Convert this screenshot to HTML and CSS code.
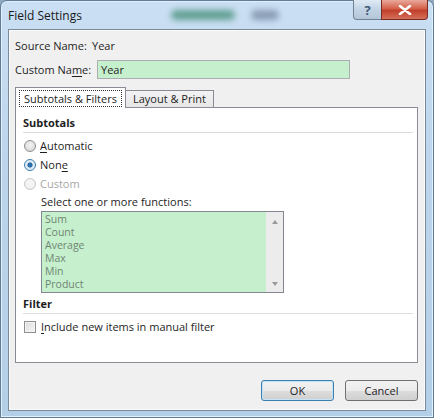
FILE: index.html
```html
<!DOCTYPE html>
<html lang="en">
<head>
    <meta charset="UTF-8">
    <title>Field Settings</title>
    <link rel="stylesheet" href="styles.css">
</head>
<body>
    <div class="window">
        <div class="titlebar">
            <span class="title">Field Settings</span>
            <span class="ghost ghost-green"></span>
            <span class="ghost ghost-grey"></span>
            <div class="caption-buttons">
                <span class="cap-btn help">?</span>
                <span class="cap-btn close">
                    <svg width="14" height="10" viewBox="0 0 14 10">
                        <path d="M2 1 L12 9 M12 1 L2 9" stroke="#fff" stroke-width="2.6" stroke-linecap="round"/>
                    </svg>
                </span>
            </div>
        </div>

        <div class="client">
            <div class="field-row">
                <span class="field-label">Source Name:</span>
                <span>Year</span>
            </div>
            <div class="field-row custom-row">
                <span class="field-label">Custom Na<u>m</u>e:</span>
                <div class="text-input">Year</div>
            </div>

            <div class="tabs">
                <div class="tab active"><span class="focus-ring">Subtotals &amp; Filters</span></div>
                <div class="tab">Layout &amp; Print</div>
            </div>

            <div class="tab-panel">
                <div class="group-title">Subtotals</div>
                <div class="option">
                    <span class="radio"></span>
                    <span><u>A</u>utomatic</span>
                </div>
                <div class="option">
                    <span class="radio checked"></span>
                    <span>Non<u>e</u></span>
                </div>
                <div class="option disabled">
                    <span class="radio"></span>
                    <span>Custom</span>
                </div>

                <div class="functions">
                    <div class="functions-label">Select one or more functions:</div>
                    <div class="listbox">
                        <ul class="items">
                            <li>Sum</li>
                            <li>Count</li>
                            <li>Average</li>
                            <li>Max</li>
                            <li>Min</li>
                            <li>Product</li>
                        </ul>
                        <div class="scrollbar">
                            <span class="arrow up"></span>
                            <span class="arrow down"></span>
                        </div>
                    </div>
                </div>

                <div class="group-title filter-title">Filter</div>
                <div class="option check-option">
                    <span class="checkbox"></span>
                    <span><u>I</u>nclude new items in manual filter</span>
                </div>
            </div>

            <div class="buttons">
                <button class="btn default">OK</button>
                <button class="btn">Cancel</button>
            </div>
        </div>
    </div>
</body>
</html>
```

FILE: styles.css
```css
* {
    margin: 0;
    padding: 0;
    box-sizing: border-box;
}

body {
    width: 434px;
    height: 418px;
    overflow: hidden;
    background: #8fa9c0;
    font-family: "Open Sans", "Noto Sans", sans-serif;
    font-size: 11px;
    color: #1e1e1e;
}

u {
    text-decoration-thickness: 1px;
    text-underline-offset: 2px;
}

/* window frame */
.window {
    height: 418px;
    display: flex;
    flex-direction: column;
    background: linear-gradient(180deg, #cadff3 0%, #bcd5ec 40%, #b3cfe7 100%);
    border: 1px solid #5f7d98;
    border-radius: 7px 7px 0 0;
    box-shadow: inset 0 0 0 1px #e3eef8;
}

.titlebar {
    height: 28px;
    display: flex;
    align-items: center;
    padding-left: 7px;
    flex-shrink: 0;
}

.title {
    font-size: 12px;
    color: #1a1a1a;
    width: 160px;
}

.ghost {
    height: 10px;
    border-radius: 5px;
    filter: blur(3px);
}

.ghost-green {
    width: 64px;
    margin-left: 3px;
    background: #3f8a73;
    opacity: 0.75;
}

.ghost-grey {
    width: 28px;
    margin-left: 16px;
    background: #6d7f9a;
    opacity: 0.7;
}

.caption-buttons {
    display: flex;
    align-self: flex-start;
    margin-left: auto;
    margin-right: 5px;
    margin-top: -1px;
}

.cap-btn {
    height: 20px;
    display: flex;
    align-items: center;
    justify-content: center;
    border: 1px solid #6f8193;
    border-top: none;
}

.help {
    width: 28px;
    border-radius: 0 0 0 4px;
    border-right: none;
    background: linear-gradient(180deg, #dfe9f4 0%, #c2d3e4 50%, #b3c6d9 100%);
    color: #3f5b77;
    font-size: 13px;
    font-weight: bold;
}

.close {
    width: 47px;
    border-radius: 0 0 4px 0;
    border-color: #7a2a22;
    background: linear-gradient(180deg, #e9a99b 0%, #d4604a 45%, #c0402b 55%, #d6705a 100%);
}

/* client area */
.client {
    flex: 1;
    margin: 0 7px 6px 7px;
    background: #f0f0f0;
    border: 1px solid #7b8a99;
    box-shadow: inset 0 0 0 1px #fbfbfb;
    display: flex;
    flex-direction: column;
    padding: 0 7px 0 6px;
}

.field-row {
    display: flex;
    align-items: center;
    height: 18px;
    margin-top: 6px;
}

.field-label {
    width: 77px;
    flex-shrink: 0;
}

.custom-row {
    margin-top: 6px;
}

.text-input {
    width: 253px;
    height: 19px;
    margin-left: 5px;
    background: #c6efce;
    border: 1px solid #abadb3;
    padding-left: 3px;
    line-height: 17px;
}

/* tabs */
.tabs {
    display: flex;
    align-items: flex-end;
    margin-top: 9px;
    height: 20px;
    position: relative;
    z-index: 1;
}

.tab {
    height: 17px;
    padding: 0 7px;
    border: 1px solid #898c95;
    border-bottom: none;
    background: linear-gradient(180deg, #f3f3f3, #e6e6e6);
    line-height: 16px;
}

.tab.active {
    background: #fff;
    padding: 2px 3px 0 3px;
    margin-bottom: -1px;
    height: 21px;
}

.tab + .tab {
    border-left: none;
}

.focus-ring {
    display: block;
    border: 1px dotted #333;
    padding: 0 4px;
    line-height: 15px;
}

.tab-panel {
    height: 256px;
    background: #fff;
    border: 1px solid #898c95;
    padding: 7px 4px 0 7px;
}

.group-title {
    font-weight: bold;
    height: 18px;
    line-height: 16px;
    border-bottom: 1px solid #dcdcdc;
}

.option {
    display: flex;
    align-items: center;
    height: 19px;
    gap: 4px;
    padding-left: 1px;
}

.group-title + .option {
    margin-top: 3px;
}

.radio {
    width: 12px;
    height: 12px;
    border-radius: 50%;
    border: 1px solid #8e8f8f;
    background: radial-gradient(circle at 50% 40%, #f4f4f4 0%, #dcdcdc 70%, #cfcfcf 100%);
}

.radio.checked {
    background: radial-gradient(circle at 50% 50%, #2a77b8 0%, #2a6aa6 30%, #d8e7f4 42%, #eef3f8 100%);
    border-color: #3c7fb1;
}

.option.disabled {
    color: #a7a7a7;
}

.option.disabled .radio {
    border-color: #c9c9c9;
    background: radial-gradient(circle at 50% 40%, #f7f7f7 0%, #ececec 100%);
}

.functions {
    padding-left: 18px;
}

.functions-label {
    height: 17px;
    line-height: 16px;
    margin-top: 1px;
}

.listbox {
    width: 243px;
    height: 82px;
    border: 1px solid #828790;
    background: #c6efce;
    display: flex;
}

.items {
    list-style: none;
    flex: 1;
    padding: 1px 0 0 3px;
    color: #6f8672;
    font-size: 10.5px;
}

.items li {
    height: 13px;
    line-height: 13px;
}

.scrollbar {
    width: 17px;
    background: #ececec;
    display: flex;
    flex-direction: column;
    justify-content: space-between;
    align-items: center;
    padding: 8px 0 6px;
}

.arrow {
    width: 0;
    height: 0;
    border-left: 3.5px solid transparent;
    border-right: 3.5px solid transparent;
}

.arrow.up {
    border-bottom: 4px solid #9a9a9a;
}

.arrow.down {
    border-top: 4px solid #9a9a9a;
}

.filter-title {
    margin-top: 3px;
}

.check-option {
    margin-top: 3px;
    gap: 5px;
}

.checkbox {
    width: 12px;
    height: 12px;
    border: 1px solid #8e8f8f;
    background: linear-gradient(135deg, #dcdcdc 0%, #f6f6f6 100%);
    box-shadow: inset 0 0 0 1px #f4f4f4;
}

/* dialog buttons */
.buttons {
    display: flex;
    justify-content: flex-end;
    gap: 11px;
    margin-top: 17px;
}

.btn {
    width: 73px;
    height: 21px;
    font-family: inherit;
    font-size: 11px;
    color: #1e1e1e;
    border: 1px solid #707070;
    border-radius: 3px;
    background: linear-gradient(180deg, #f2f2f2 0%, #ebebeb 50%, #dddddd 51%, #cfcfcf 100%);
}

.btn.default {
    border-color: #3c7fb1;
    box-shadow: inset 0 0 0 1px #c5e3f6;
}
```
